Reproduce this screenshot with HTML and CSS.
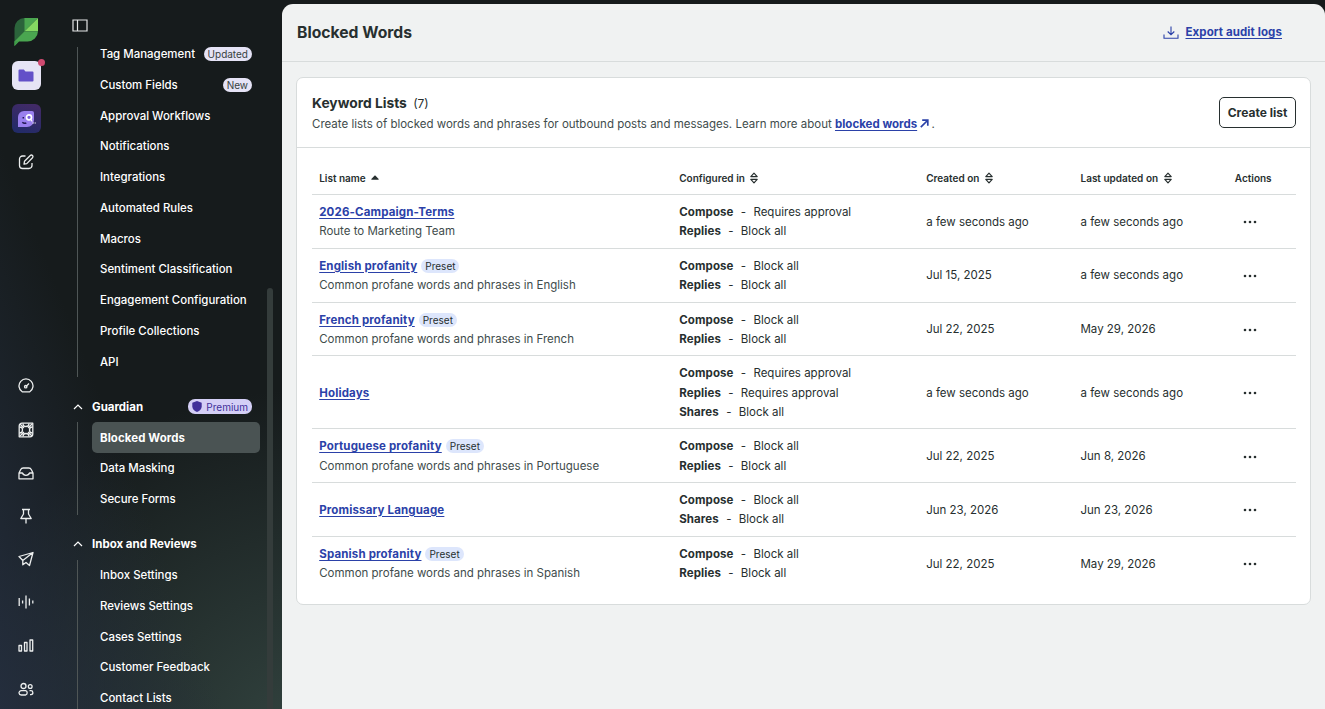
FILE: index.html
```html
<!DOCTYPE html>
<html lang="en">
<head>
    <meta charset="UTF-8">
    <meta name="viewport" content="width=device-width, initial-scale=1.0">
    <title>Blocked Words</title>
    <link rel="stylesheet" href="styles.css">
</head>
<body>
    <!-- Shared icons -->
    <svg class="sprite" width="0" height="0">
        <symbol id="sort" viewBox="0 0 10 12">
            <path d="M1.8 4.6L5 1.2l3.2 3.4zM1.8 7.4L5 10.8l3.2-3.4z" fill="none" stroke="currentColor" stroke-width="1.2" stroke-linejoin="round"/>
        </symbol>
        <symbol id="dots" viewBox="0 0 14 4">
            <circle cx="2" cy="2" r="1.3"/><circle cx="7" cy="2" r="1.3"/><circle cx="12" cy="2" r="1.3"/>
        </symbol>
        <symbol id="chevron" viewBox="0 0 10 6">
            <path d="M1 5l4-4 4 4" fill="none" stroke="currentColor" stroke-width="1.2"/>
        </symbol>
    </svg>

    <div class="app">
        <nav class="rail">
            <a class="rail-item">
                <svg width="26" height="30" viewBox="0 0 26 30">
                    <path d="M1.500 11A10 10 0 0 1 11.500 1H25L1.500 24.500z" fill="#2b643b"/>
                    <path d="M11.500 1h13.300L11.500 14.300z" fill="#4aa650"/>
                    <path d="M25 1v13.300H11.500z" fill="#85d962"/>
                    <path d="M11.500 14.300H25A10.500 10.500 0 0 1 14.500 24.500H6L1.500 29v-4.700z" fill="#4aa650"/>
                    <path d="M1.500 24.300H6L1.500 29z" fill="#3f9b49"/>
                </svg>
            </a>
            <a class="rail-item">
                <span class="tile tile-folder">
                    <svg width="16" height="13" viewBox="0 0 16 13"><path d="M.5 1.500Q.5.500 1.500.500h4.300l1.700 2h7q1 0 1 1v8q0 1-1 1h-13q-1 0-1-1z" fill="#6350c8"/></svg>
                    <span class="tile-dot"></span>
                </span>
            </a>
            <a class="rail-item">
                <span class="tile tile-agent">
                    <svg width="20" height="18" viewBox="0 0 20 18">
                        <path d="M2 7a6 6 0 0 1 6-6h8a2 2 0 0 1 2 2v7a7 7 0 0 1-7 7H2z" fill="#9a80ee"/>
                        <circle cx="13" cy="7.300" r="2.500" fill="#7a5fdc" stroke="#fff" stroke-width="1.700"/>
                        <path d="M15 9.500l1.200 2M16.500 13h1.200M18.600 13h1.200" stroke="#fff" stroke-width="1.200"/>
                        <path d="M7.300 7v1.600M6.300 12.300q2 1.700 4 .5" stroke="#231a52" stroke-width="1.500" fill="none"/>
                    </svg>
                </span>
            </a>
            <a class="rail-item">
                <svg class="line-icon" viewBox="0 0 16 16"><path d="M7.500 2H4.500A3 3 0 0 0 1.500 5v6.500a3 3 0 0 0 3 3H11a3 3 0 0 0 3-3V9M6 10.200l.5-2.900 5.800-5.800a1.500 1.500 0 0 1 2.200 2.200L8.800 9.600z"/></svg>
            </a>

            <div class="rail-bottom">
                <a class="rail-item"><svg class="line-icon" viewBox="0 0 16 16"><path d="M4.200 13.800a7 7 0 1 1 7.600 0z"/><path d="M8 8.500l3-3"/><circle cx="7.700" cy="8.700" r="1.200"/></svg></a>
                <a class="rail-item"><svg class="line-icon" viewBox="0 0 16 16"><path d="M4 1.200h10.800V12a2.800 2.800 0 0 1-2.800 2.800H1.200V4A2.800 2.800 0 0 1 4 1.200z"/><path d="M2 2l4 4M14 2l-4 4M2 14l4-4M14 14l-4-4M5 1.500Q5 4.500 8 4.500t3-3M5 14.500q0-3 3-3t3 3M1.500 5q3 0 3 3t-3 3M14.500 5q-3 0-3 3t3 3"/></svg></a>
                <a class="rail-item"><svg class="line-icon" viewBox="0 0 16 16"><path d="M1 8l1.600-3.300A3 3 0 0 1 5.400 3h5.200a3 3 0 0 1 2.800 1.700L15 8v5.800H1zM1 8h3.500a3.600 3 0 0 0 7 0H15"/></svg></a>
                <a class="rail-item"><svg class="line-icon" viewBox="0 0 16 16"><path d="M4 1.500h8M5.500 1.500v4.500L2.800 10.500h10.400L10.500 6V1.500M8 10.500V15.500"/></svg></a>
                <a class="rail-item"><svg class="line-icon" viewBox="0 0 16 16"><path d="M1 5.500L15 1.500 11.500 14.500 8 11.500 4.800 13.800V9.500zM4.800 9.500L15 1.500"/></svg></a>
                <a class="rail-item"><svg class="line-icon" viewBox="0 0 16 16"><path d="M1.200 4v8M4.600 6.500v3M8 1.500v13M11.400 4.500v7M14.800 6.500v3"/></svg></a>
                <a class="rail-item"><svg class="line-icon" viewBox="0 0 16 16"><path d="M1 8.500h2.500V14H1zM6.500 5.500H9V14H6.500zM12 3h2.700v11H12z"/></svg></a>
                <a class="rail-item"><svg class="line-icon" viewBox="0 0 16 16"><circle cx="5.500" cy="5" r="2.500"/><circle cx="12.200" cy="5.500" r="1.900"/><path d="M1 12a2.300 2.300 0 0 1 2.300-2.300h4.400a2.300 2.300 0 0 1 0 4.300H3.300A2.300 2.300 0 0 1 1 12zM11.500 9.700h1.200a2 2 0 0 1 .3 4h-1"/></svg></a>
            </div>
        </nav>

        <aside class="sidebar">
            <div class="sidebar-top">
                <svg width="16" height="13" viewBox="0 0 16 13"><path d="M1 1h14v11H1zM5.500 1v11" fill="none" stroke="#e4e6e6" stroke-width="1.200"/></svg>
            </div>
            <div class="sidebar-scroll">
                <ul class="menu menu-scrolled">
                    <li><a>Tag Management</a><span class="badge">Updated</span></li>
                    <li><a>Custom Fields</a><span class="badge">New</span></li>
                    <li><a>Approval Workflows</a></li>
                    <li><a>Notifications</a></li>
                    <li><a>Integrations</a></li>
                    <li><a>Automated Rules</a></li>
                    <li><a>Macros</a></li>
                    <li><a>Sentiment Classification</a></li>
                    <li><a>Engagement Configuration</a></li>
                    <li><a>Profile Collections</a></li>
                    <li><a>API</a></li>
                </ul>

                <div class="menu-title">
                    <svg width="10" height="6"><use href="#chevron"/></svg>
                    <span>Guardian</span>
                    <span class="badge badge-premium">
                        <svg width="10" height="11" viewBox="0 0 10 11"><path d="M5 0l4.700 1.700v4Q9.500 9 5 11 .5 9 .3 5.700v-4z" fill="#41309a"/></svg>
                        Premium
                    </span>
                </div>
                <ul class="menu">
                    <li class="active"><a>Blocked Words</a></li>
                    <li><a>Data Masking</a></li>
                    <li><a>Secure Forms</a></li>
                </ul>

                <div class="menu-title">
                    <svg width="10" height="6"><use href="#chevron"/></svg>
                    <span>Inbox and Reviews</span>
                </div>
                <ul class="menu">
                    <li><a>Inbox Settings</a></li>
                    <li><a>Reviews Settings</a></li>
                    <li><a>Cases Settings</a></li>
                    <li><a>Customer Feedback</a></li>
                    <li><a>Contact Lists</a></li>
                </ul>
                <span class="scrollbar"></span>
            </div>
        </aside>

        <main class="main">
            <header class="page-header">
                <h1>Blocked Words</h1>
                <a class="export" href="#">
                    <svg width="16" height="13" viewBox="0 0 16 13"><path d="M1 8.500v3.700h14V8.500M8 .5v8M4.700 5.500L8 8.700l3.300-3.200" fill="none" stroke="currentColor" stroke-width="1.100"/></svg>
                    <span>Export audit logs</span>
                </a>
            </header>

            <section class="card">
                <div class="card-header">
                    <div class="card-title">
                        <h2>Keyword Lists <span class="count">(7)</span></h2>
                        <p>Create lists of blocked words and phrases for outbound posts and messages. Learn more about <a class="link" href="#">blocked words</a> <svg class="external" width="9" height="9" viewBox="0 0 9 9"><path d="M.8 8.200L7.500 1.500M2.200 1.200h5.600v5.600" fill="none" stroke="currentColor" stroke-width="1.700"/></svg>&thinsp;.</p>
                    </div>
                    <button class="create">Create list</button>
                </div>

                <div class="table-wrap">
                    <table>
                        <colgroup>
                            <col class="col-name"><col class="col-config"><col class="col-date"><col class="col-date"><col>
                        </colgroup>
                        <thead>
                            <tr>
                                <th>List name <svg class="sort-up" width="8" height="5" viewBox="0 0 8 5"><path d="M4 .3L7.700 4q.3.700-.5.700H.8Q0 4.700.3 4z" fill="currentColor"/></svg></th>
                                <th>Configured in <svg class="sort" width="10" height="12"><use href="#sort"/></svg></th>
                                <th>Created on <svg class="sort" width="10" height="12"><use href="#sort"/></svg></th>
                                <th>Last updated on <svg class="sort" width="10" height="12"><use href="#sort"/></svg></th>
                                <th>Actions</th>
                            </tr>
                        </thead>
                        <tbody>
                            <tr>
                                <td><a class="link" href="#">2026-Campaign-Terms</a><div class="desc">Route to Marketing Team</div></td>
                                <td><div><b>Compose</b><i>-</i>Requires approval</div><div><b>Replies</b><i>-</i>Block all</div></td>
                                <td>a few seconds ago</td>
                                <td>a few seconds ago</td>
                                <td><svg class="dots" width="14" height="4"><use href="#dots"/></svg></td>
                            </tr>
                            <tr>
                                <td><a class="link" href="#">English profanity</a><span class="preset">Preset</span><div class="desc">Common profane words and phrases in English</div></td>
                                <td><div><b>Compose</b><i>-</i>Block all</div><div><b>Replies</b><i>-</i>Block all</div></td>
                                <td>Jul 15, 2025</td>
                                <td>a few seconds ago</td>
                                <td><svg class="dots" width="14" height="4"><use href="#dots"/></svg></td>
                            </tr>
                            <tr>
                                <td><a class="link" href="#">French profanity</a><span class="preset">Preset</span><div class="desc">Common profane words and phrases in French</div></td>
                                <td><div><b>Compose</b><i>-</i>Block all</div><div><b>Replies</b><i>-</i>Block all</div></td>
                                <td>Jul 22, 2025</td>
                                <td>May 29, 2026</td>
                                <td><svg class="dots" width="14" height="4"><use href="#dots"/></svg></td>
                            </tr>
                            <tr>
                                <td><a class="link" href="#">Holidays</a></td>
                                <td><div><b>Compose</b><i>-</i>Requires approval</div><div><b>Replies</b><i>-</i>Requires approval</div><div><b>Shares</b><i>-</i>Block all</div></td>
                                <td>a few seconds ago</td>
                                <td>a few seconds ago</td>
                                <td><svg class="dots" width="14" height="4"><use href="#dots"/></svg></td>
                            </tr>
                            <tr>
                                <td><a class="link" href="#">Portuguese profanity</a><span class="preset">Preset</span><div class="desc">Common profane words and phrases in Portuguese</div></td>
                                <td><div><b>Compose</b><i>-</i>Block all</div><div><b>Replies</b><i>-</i>Block all</div></td>
                                <td>Jul 22, 2025</td>
                                <td>Jun 8, 2026</td>
                                <td><svg class="dots" width="14" height="4"><use href="#dots"/></svg></td>
                            </tr>
                            <tr>
                                <td><a class="link" href="#">Promissary Language</a></td>
                                <td><div><b>Compose</b><i>-</i>Block all</div><div><b>Shares</b><i>-</i>Block all</div></td>
                                <td>Jun 23, 2026</td>
                                <td>Jun 23, 2026</td>
                                <td><svg class="dots" width="14" height="4"><use href="#dots"/></svg></td>
                            </tr>
                            <tr>
                                <td><a class="link" href="#">Spanish profanity</a><span class="preset">Preset</span><div class="desc">Common profane words and phrases in Spanish</div></td>
                                <td><div><b>Compose</b><i>-</i>Block all</div><div><b>Replies</b><i>-</i>Block all</div></td>
                                <td>Jul 22, 2025</td>
                                <td>May 29, 2026</td>
                                <td><svg class="dots" width="14" height="4"><use href="#dots"/></svg></td>
                            </tr>
                        </tbody>
                    </table>
                </div>
            </section>
        </main>
    </div>
</body>
</html>
```
FILE: styles.css
```css
* {
    box-sizing: border-box;
}

body {
    margin: 0;
    font-family: Inter, "Liberation Sans", sans-serif;
    font-size: 11.5px;
    line-height: 19.2px;
    color: #272f2f;
    overflow: hidden;
}

.sprite {
    position: absolute;
}

.app {
    display: flex;
    height: 709px;
    padding-top: 4px;
    background: linear-gradient(to top right, rgba(37, 47, 64, 0.9) 0%, rgba(37, 47, 64, 0) 40%) no-repeat,
                radial-gradient(circle at 300px 740px, #32433f 0%, rgba(50, 67, 63, 0) 350px) no-repeat,
                #161b1c;
    background-size: 282px 709px, 282px 709px, auto;
}

/* Icon rail */
.rail {
    width: 52px;
    padding-top: 6.7px;
    flex-shrink: 0;
}

.rail-item {
    display: flex;
    align-items: center;
    justify-content: center;
    height: 43.2px;
}

.rail-bottom {
    margin-top: 181.3px;
}

.line-icon {
    width: 16px;
    height: 16px;
    fill: none;
    stroke: #eceeee;
    stroke-width: 1.3;
    stroke-linejoin: round;
}

.tile {
    position: relative;
    display: flex;
    align-items: center;
    justify-content: center;
    width: 29px;
    height: 29px;
    border-radius: 6px;
}

.tile-folder {
    background: #e6e4f5;
}

.tile-agent {
    background: linear-gradient(20deg, #1f2b68, #452a66);
}

.tile-dot {
    position: absolute;
    top: -2px;
    right: -4px;
    width: 7px;
    height: 7px;
    border-radius: 50%;
    background: #cf4a70;
}

/* Sidebar */
.sidebar {
    display: flex;
    flex-direction: column;
    width: 230px;
    flex-shrink: 0;
    color: #fff;
}

.sidebar-top {
    display: flex;
    align-items: center;
    height: 43px;
    padding-left: 20px;
}

.sidebar-scroll {
    position: relative;
    flex: 1;
    overflow: hidden;
    padding: 0 22px 0 25px;
}

.menu {
    list-style: none;
    margin: 0 0 14.4px;
    padding: 0 0 0 14px;
    border-left: 1px solid #4f5656;
}

.menu li {
    display: flex;
    align-items: center;
    justify-content: space-between;
    height: 30.77px;
    padding: 0 8px;
    border-radius: 5px;
    font-size: 11.45px;
    font-weight: 500;
    white-space: nowrap;
}

.menu a,
.menu-title span:not(.badge) {
    padding-top: 1.2px;
}

.menu-scrolled li:first-child {
    height: 22.4px;
    padding-bottom: 8px;
}

.menu .active {
    background: #4a5353;
    font-weight: 700;
    letter-spacing: 0.1px;
}

.menu-title {
    display: flex;
    align-items: center;
    height: 30.77px;
    margin-left: -4px;
    padding-right: 8px;
    font-weight: 700;
}

.menu-title svg {
    margin-right: 9px;
}

.badge {
    height: 14px;
    padding: 0 4px;
    border-radius: 7px;
    background: #e5e3f6;
    color: #364141;
    font-size: 10px;
    font-weight: 400;
    line-height: 14.5px;
}

.badge-premium {
    display: flex;
    align-items: center;
    margin-left: auto;
    height: 15px;
    background: #d4cff6;
    color: #41309a;
}

.menu-title .badge-premium svg {
    margin-right: 4px;
}

.scrollbar {
    position: absolute;
    top: 241px;
    right: 9px;
    bottom: 0;
    width: 6px;
    border-radius: 3px 3px 0 0;
    background: #343c3b;
}

/* Main */
.main {
    flex: 1;
    background: #f0f2f2;
    border-radius: 11px 11px 0 0;
}

.page-header {
    display: flex;
    align-items: center;
    justify-content: space-between;
    height: 58px;
    padding: 0 43px 0 15px;
    border-bottom: 1px solid #d8dcdc;
}

h1 {
    margin: 0;
    font-size: 15.7px;
    font-weight: 700;
}

.export {
    display: flex;
    align-items: center;
    gap: 6px;
    color: #2b41a8;
    font-weight: 700;
    letter-spacing: 0.1px;
    text-decoration: none;
}

.export span {
    padding-top: 1.2px;
}

.export span,
.link {
    text-decoration: underline;
    text-underline-offset: 2px;
}

.card {
    margin: 15px 14px 0;
    border: 1px solid #d8dcdc;
    border-radius: 7px;
    background: #fff;
}

.card-header {
    display: flex;
    align-items: center;
    justify-content: space-between;
    height: 70px;
    padding: 0 14px 0 15px;
    border-bottom: 1px solid #d8dcdc;
}

.card-title {
    padding-top: 2px;
}

h2 {
    margin: 0;
    font-size: 13.8px;
    font-weight: 700;
    line-height: 22px;
}

.count {
    margin-left: 3px;
    font-size: 12px;
    font-weight: 400;
}

.card-header p {
    margin: 0;
    color: #414c4c;
}

.link {
    color: #2b41a8;
    font-weight: 700;
}

td .link {
    letter-spacing: 0.16px;
}

.external {
    color: #2b41a8;
}

.create {
    width: 77px;
    height: 31px;
    padding: 0;
    border: 1px solid #272f2f;
    border-radius: 5px;
    background: #fff;
    color: #272f2f;
    font: inherit;
    font-size: 12px;
    font-weight: 700;
}

.table-wrap {
    padding: 14.6px 14px 14px 15px;
}

table {
    width: 100%;
    border-collapse: separate;
    border-spacing: 0;
    table-layout: fixed;
}

.col-name {
    width: 360px;
}

.col-config {
    width: 247px;
}

.col-date {
    width: 154.3px;
}

th,
td {
    padding: 7.9px 7.2px 6.5px;
    text-align: left;
    vertical-align: middle;
}

th {
    height: 31.5px;
    padding-top: 0;
    padding-bottom: 0;
    font-size: 10px;
    font-weight: 600;
    white-space: nowrap;
}

td {
    border-top: 1px solid #d8dcdc;
}

td i {
    margin: 0 7.3px;
    font-style: normal;
}

b {
    font-weight: 700;
    letter-spacing: 0.1px;
}

.desc {
    color: #414c4c;
}

.preset {
    display: inline-block;
    height: 14px;
    margin-left: 4px;
    padding: 0 4px;
    border-radius: 7px;
    background: #dde6fc;
    font-size: 10px;
    line-height: 14px;
}

.sort {
    margin-left: 2px;
    vertical-align: -2px;
}

.sort-up {
    margin-left: 3px;
    vertical-align: 2px;
}

.dots {
    display: block;
    margin-left: 8px;
    fill: #272f2f;
}
```
